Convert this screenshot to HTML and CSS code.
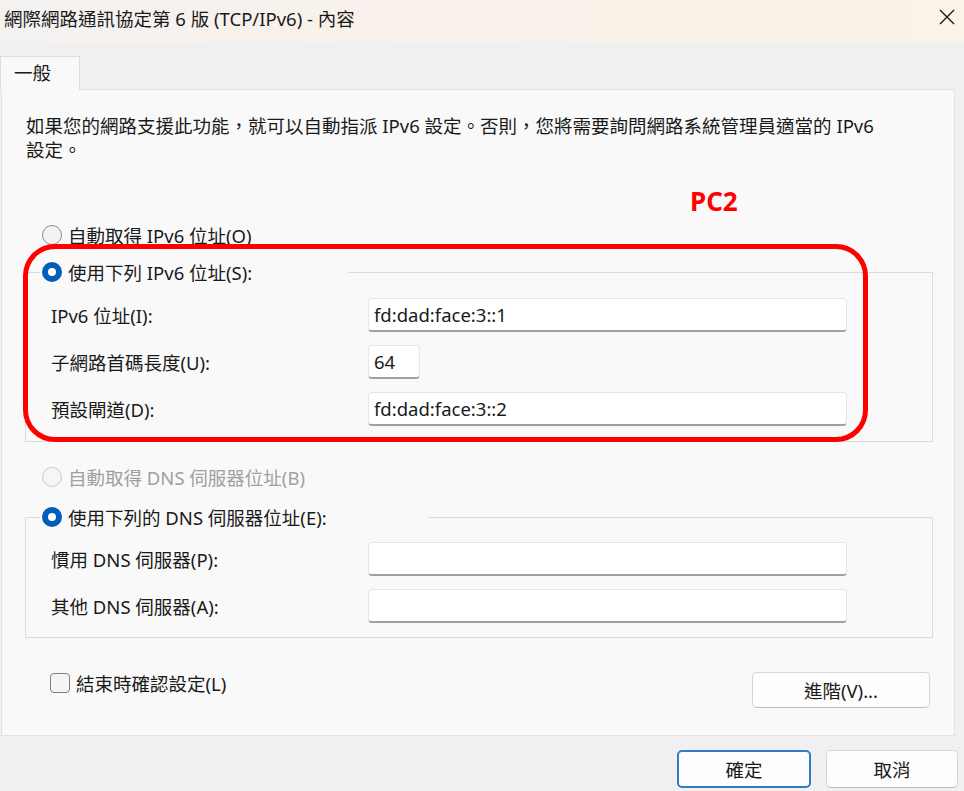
FILE: index.html
```html
<!DOCTYPE html>
<html lang="zh-Hant">
<head>
  <meta charset="UTF-8" />
  <title>網際網路通訊協定第 6 版 (TCP/IPv6) - 內容</title>
  <link rel="stylesheet" href="styles.css">
</head>
<body>
  <div class="titlebar">
    <span class="title">網際網路通訊協定第 6 版 (TCP/IPv6) - 內容</span>
    <svg class="close" width="16" height="16" viewBox="0 0 16 16">
      <path d="M1 1 L15 15 M15 1 L1 15" stroke="#1a1a1a" stroke-width="1.4" fill="none" />
    </svg>
  </div>

  <div class="tabs">
    <div class="tab">一般</div>
  </div>

  <div class="panel">
    <p class="desc">如果您的網路支援此功能，就可以自動指派 IPv6 設定。否則，您將需要詢問網路系統管理員適當的 IPv6 設定。</p>

    <!-- annotation drawn over the dialog -->
    <div class="note">PC2</div>
    <div class="highlight"></div>

    <label class="option">
      <input type="radio" name="ip" class="radio"> 自動取得 IPv6 位址(O)
    </label>

    <fieldset class="group group-ip">
      <legend>
        <label class="option-title"><input type="radio" name="ip" class="radio" checked> 使用下列 IPv6 位址(S):</label>
      </legend>
      <div class="row">
        <label>IPv6 位址(I):</label>
        <input type="text" class="field" value="fd:dad:face:3::1">
      </div>
      <div class="row">
        <label>子網路首碼長度(U):</label>
        <input type="text" class="field field-short" value="64">
      </div>
      <div class="row">
        <label>預設閘道(D):</label>
        <input type="text" class="field" value="fd:dad:face:3::2">
      </div>
    </fieldset>

    <label class="option option-dns disabled">
      <input type="radio" name="dns" class="radio" disabled> 自動取得 DNS 伺服器位址(B)
    </label>

    <fieldset class="group group-dns">
      <legend>
        <label class="option-title"><input type="radio" name="dns" class="radio" checked> 使用下列的 DNS 伺服器位址(E):</label>
      </legend>
      <div class="row">
        <label>慣用 DNS 伺服器(P):</label>
        <input type="text" class="field" value="">
      </div>
      <div class="row">
        <label>其他 DNS 伺服器(A):</label>
        <input type="text" class="field" value="">
      </div>
    </fieldset>

    <div class="panel-footer">
      <label class="check"><input type="checkbox" class="checkbox"> 結束時確認設定(L)</label>
      <button class="btn btn-advanced">進階(V)...</button>
    </div>
  </div>

  <div class="actions">
    <button class="btn btn-primary">確定</button>
    <button class="btn btn-cancel">取消</button>
  </div>
</body>
</html>
```

FILE: styles.css
```css
body {
  margin: 0;
  width: 964px;
  height: 791px;
  overflow: hidden;
  background: #f0f0f0;
  font-family: "Noto Sans", "Noto Sans CJK TC", sans-serif;
  font-size: 18.5px;
  color: #1a1a1a;
}

.titlebar {
  height: 42px;
  display: flex;
  align-items: center;
  justify-content: space-between;
  padding-left: 4px;
  background: linear-gradient(to right, #f4f2f1 0%, #f9f1ea 45%, #faf3e7 100%);
}

.title {
  line-height: 28px;
  margin-top: -4px;
}

.close {
  margin-right: 9px;
  margin-top: -8px;
}

.tabs {
  height: 47px;
  display: flex;
  align-items: flex-end;
}

.tab {
  width: 80px;
  height: 34px;
  box-sizing: border-box;
  margin-bottom: -1px;
  padding-left: 13px;
  line-height: 32px;
  background: #f9f9f9;
  border: 1px solid #dedede;
  border-bottom: none;
  position: relative;
  z-index: 1;
}

.panel {
  position: relative;
  margin-left: 1px;
  width: 954px;
  height: 647px;
  box-sizing: border-box;
  padding: 24px 0 0 23px;
  background: #f9f9f9;
  border: 1px solid #e2e2e2;
}

.desc {
  margin: 0 0 0 1px;
  width: 858px;
  line-height: 24px;
}

.note {
  position: absolute;
  left: 688px;
  top: 98px;
  font-size: 26px;
  line-height: 26px;
  font-weight: bold;
  color: #ff0000;
}

.highlight {
  position: absolute;
  left: 21px;
  top: 154px;
  width: 845px;
  height: 198px;
  box-sizing: border-box;
  border: 5px solid #ff0000;
  border-radius: 32px;
  pointer-events: none;
}

.option {
  display: flex;
  align-items: center;
  gap: 6px;
  height: 28px;
  margin-top: 59px;
  padding-left: 17px;
}

.option-dns {
  margin-top: 21px;
}

.disabled {
  color: #a0a0a0;
}

.radio {
  appearance: none;
  margin: 0;
  width: 20px;
  height: 20px;
  box-sizing: border-box;
  border-radius: 50%;
  border: 1px solid #8a8a8a;
  background: #f3f3f3;
}

.radio:checked {
  border: 6px solid #005fb8;
  background: #ffffff;
}

.radio:disabled {
  border-color: #c9c9c9;
  background: #f6f6f6;
}

.group {
  margin: 9px 0 0 0;
  width: 908px;
  box-sizing: border-box;
  border: 1px solid #dcdcdc;
  padding: 12px 0 15px 14px;
}

.group-dns {
  margin-top: 12px;
  padding-top: 11px;
  padding-bottom: 14px;
}

.group legend {
  padding: 0 0 0 2px;
  height: 28px;
}

.group-ip legend {
  width: 306px;
}

.group-dns legend {
  width: 386px;
}

.option-title {
  display: flex;
  align-items: center;
  gap: 6px;
  height: 28px;
}

.row {
  display: flex;
  align-items: center;
  height: 34px;
  padding-left: 11px;
}

.row + .row {
  margin-top: 13px;
}

.row label {
  width: 317px;
}

.field {
  width: 479px;
  height: 34px;
  box-sizing: border-box;
  margin: 0;
  padding: 0 5px;
  font: inherit;
  color: #1a1a1a;
  background: #ffffff;
  border: 1px solid #e6e6e6;
  border-bottom: 2px solid #a0a0a0;
  border-radius: 4px;
}

.field-short {
  width: 52px;
}

.panel-footer {
  display: flex;
  justify-content: space-between;
  align-items: flex-start;
  margin-top: 31px;
  padding: 0 24px 0 25px;
}

.check {
  display: flex;
  align-items: center;
  gap: 6px;
  height: 28px;
}

.checkbox {
  appearance: none;
  margin: 0;
  width: 20px;
  height: 20px;
  box-sizing: border-box;
  border: 1.5px solid #7f7f7f;
  border-radius: 4px;
  background: #f5f5f5;
}

.btn {
  font: inherit;
  color: #1a1a1a;
  background: #fdfdfd;
  border: 1px solid #d6d6d6;
  border-bottom-color: #bdbdbd;
  border-radius: 5px;
  padding: 0;
}

.btn-advanced {
  margin-top: 3px;
  width: 178px;
  height: 36px;
}

.actions {
  display: flex;
  justify-content: flex-end;
  gap: 15px;
  margin-top: 14px;
  padding-right: 6px;
}

.btn-primary {
  width: 134px;
  height: 38px;
  border: 2px solid #2f7bc8;
}

.btn-cancel {
  width: 132px;
  height: 38px;
}
```
